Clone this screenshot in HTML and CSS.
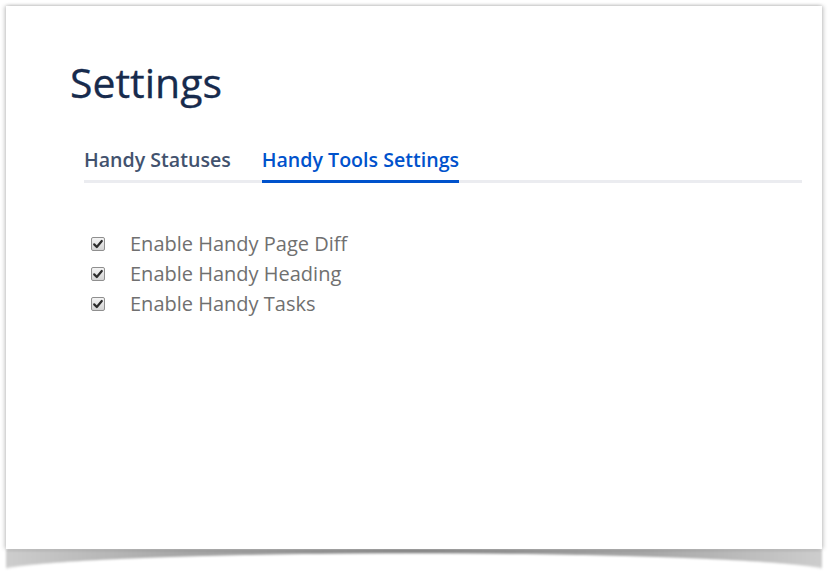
FILE: index.html
```html
<!DOCTYPE html>
<html lang="en">
<head>
<meta charset="utf-8">
<title>Settings</title>
<link rel="stylesheet" href="styles.css">
</head>
<body>
<div class="stage">
  <div class="card">
    <h1 class="title">Settings</h1>
    <div class="tabs">
      <div class="tab">Handy Statuses</div>
      <div class="tab tab-active">Handy Tools Settings</div>
    </div>
    <ul class="options">
      <li class="option"><span class="check"><svg viewBox="0 0 14 14" width="14" height="14"><path d="M3.2 7.4 L5.8 10 L10.8 4" fill="none" stroke="#2b2b2b" stroke-width="2.2" stroke-linecap="round" stroke-linejoin="round"/></svg></span><span class="label">Enable Handy Page Diff</span></li>
      <li class="option"><span class="check"><svg viewBox="0 0 14 14" width="14" height="14"><path d="M3.2 7.4 L5.8 10 L10.8 4" fill="none" stroke="#2b2b2b" stroke-width="2.2" stroke-linecap="round" stroke-linejoin="round"/></svg></span><span class="label">Enable Handy Heading</span></li>
      <li class="option"><span class="check"><svg viewBox="0 0 14 14" width="14" height="14"><path d="M3.2 7.4 L5.8 10 L10.8 4" fill="none" stroke="#2b2b2b" stroke-width="2.2" stroke-linecap="round" stroke-linejoin="round"/></svg></span><span class="label">Enable Handy Tasks</span></li>
    </ul>
  </div>
  <div class="card-shadow"></div>
</div>
</body>
</html>
```

FILE: styles.css
```css
html, body {
  margin: 0;
  padding: 0;
  background: #ffffff;
}

.stage {
  padding: 6px 0 0 6px;
  width: 816px;
}

.card {
  box-sizing: border-box;
  width: 816px;
  height: 543px;
  background: #ffffff;
  box-shadow: -2px 0 4px rgba(0, 0, 0, 0.16), 2px 0 4px rgba(0, 0, 0, 0.16), 0 -1px 3px rgba(0, 0, 0, 0.08);
  padding: 51px 20px 0 64px;
  font-family: "Open Sans", "Noto Sans", sans-serif;
  position: relative;
  z-index: 1;
}

.title {
  margin: 0;
  font-size: 41px;
  line-height: 50px;
  font-weight: 400;
  color: #172b4d;
  -webkit-text-stroke: 0.3px #172b4d;
}

.tabs {
  display: flex;
  gap: 31px;
  margin: 40px 0 0 14px;
  border-bottom: 3px solid #ebecf0;
}

.tab {
  font-size: 19.6px;
  line-height: 26px;
  font-weight: 600;
  padding-bottom: 7px;
  color: #42526e;
  margin-bottom: -3px;
  border-bottom: 3px solid transparent;
}

.tab-active {
  color: #0052cc;
  border-bottom-color: #0052cc;
}

.options {
  list-style: none;
  margin: 46px 0 0 21px;
  padding: 0;
}

.option {
  display: flex;
  align-items: center;
  height: 30px;
}

.check {
  box-sizing: border-box;
  width: 14px;
  height: 14px;
  border: 1px solid #8f8f8f;
  border-radius: 2px;
  background: linear-gradient(#f4f4f4, #d2d2d2);
  display: flex;
  align-items: center;
  justify-content: center;
  margin-right: 25px;
}

.check svg {
  display: block;
  flex: none;
}

.label {
  font-size: 20px;
  line-height: 26px;
  color: #707070;
}

.card-shadow {
  width: 816px;
  height: 24px;
  background:
    radial-gradient(ellipse 430px 20px at 50% 100%, #ffffff 96%, rgba(255,255,255,0) 100%),
    linear-gradient(90deg, #cdcdcd 0%, #a6a6a6 22%, #8c8c8c 50%, #a6a6a6 78%, #cdcdcd 100%);
  filter: blur(0.8px);
}
```
